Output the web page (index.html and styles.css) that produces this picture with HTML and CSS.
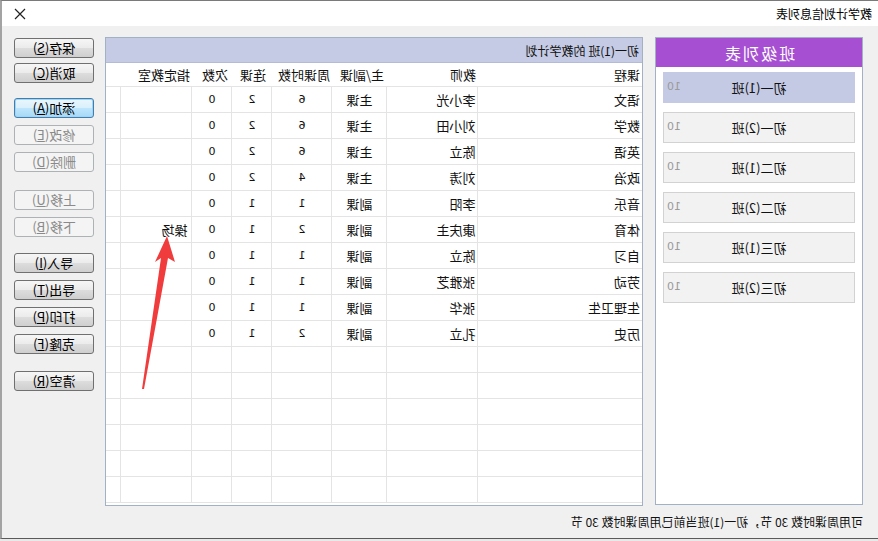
FILE: index.html
```html
<!DOCTYPE html>
<html lang="zh-CN">
<head>
<meta charset="utf-8">
<title>教学计划信息列表</title>
<link rel="stylesheet" href="styles.css">
</head>
<body>
<div class="window">
  <div class="titlebar">
    <span class="title">教学计划信息列表</span>
    <svg class="close" width="12" height="12" viewBox="0 0 12 12"><path d="M1 1 L11 11 M11 1 L1 11" stroke="#222" stroke-width="1.2" fill="none"/></svg>
  </div>
  <div class="content">
    <div class="main">
      <div class="classpanel">
        <div class="classhead">班级列表</div>
        <div class="classlist">
          <div class="classitem sel"><span class="cname">初一(1)班</span><span class="ccount">10</span></div>
          <div class="classitem"><span class="cname">初一(2)班</span><span class="ccount">10</span></div>
          <div class="classitem"><span class="cname">初二(1)班</span><span class="ccount">10</span></div>
          <div class="classitem"><span class="cname">初二(2)班</span><span class="ccount">10</span></div>
          <div class="classitem"><span class="cname">初三(1)班</span><span class="ccount">10</span></div>
          <div class="classitem"><span class="cname">初三(2)班</span><span class="ccount">10</span></div>
        </div>
      </div>
      <div class="tablepanel">
        <div class="tablehead">初一(1)班 的教学计划</div>
        <table class="grid">
          <colgroup>
            <col class="c1"><col class="c2"><col class="c3"><col class="c4"><col class="c5"><col class="c6"><col class="c7"><col class="c8">
          </colgroup>
          <thead>
            <tr><th>课程</th><th>教师</th><th class="h3">主/副课</th><th class="h4">周课时数</th><th class="h5">连课</th><th class="h6">次数</th><th class="h7">指定教室</th><th></th></tr>
          </thead>
          <tbody>
            <tr><td>语文</td><td>李小光</td><td class="ct">主课</td><td class="ct">6</td><td class="ct">2</td><td class="ct">0</td><td class="room"></td><td></td></tr>
            <tr><td>数学</td><td>刘小田</td><td class="ct">主课</td><td class="ct">6</td><td class="ct">2</td><td class="ct">0</td><td class="room"></td><td></td></tr>
            <tr><td>英语</td><td>陈立</td><td class="ct">主课</td><td class="ct">6</td><td class="ct">2</td><td class="ct">0</td><td class="room"></td><td></td></tr>
            <tr><td>政治</td><td>刘涛</td><td class="ct">主课</td><td class="ct">4</td><td class="ct">2</td><td class="ct">0</td><td class="room"></td><td></td></tr>
            <tr><td>音乐</td><td>李阳</td><td class="ct">副课</td><td class="ct">1</td><td class="ct">1</td><td class="ct">0</td><td class="room"></td><td></td></tr>
            <tr><td>体育</td><td>康庆主</td><td class="ct">副课</td><td class="ct">2</td><td class="ct">1</td><td class="ct">0</td><td class="room">操场</td><td></td></tr>
            <tr><td>自习</td><td>陈立</td><td class="ct">副课</td><td class="ct">1</td><td class="ct">1</td><td class="ct">0</td><td class="room"></td><td></td></tr>
            <tr><td>劳动</td><td>张雅芝</td><td class="ct">副课</td><td class="ct">1</td><td class="ct">1</td><td class="ct">0</td><td class="room"></td><td></td></tr>
            <tr><td>生理卫生</td><td>张华</td><td class="ct">副课</td><td class="ct">1</td><td class="ct">1</td><td class="ct">0</td><td class="room"></td><td></td></tr>
            <tr><td>历史</td><td>孔立</td><td class="ct">副课</td><td class="ct">2</td><td class="ct">1</td><td class="ct">0</td><td class="room"></td><td></td></tr>
            <tr><td></td><td></td><td></td><td></td><td></td><td></td><td></td><td></td></tr>
            <tr><td></td><td></td><td></td><td></td><td></td><td></td><td></td><td></td></tr>
            <tr><td></td><td></td><td></td><td></td><td></td><td></td><td></td><td></td></tr>
            <tr><td></td><td></td><td></td><td></td><td></td><td></td><td></td><td></td></tr>
            <tr><td></td><td></td><td></td><td></td><td></td><td></td><td></td><td></td></tr>
            <tr><td></td><td></td><td></td><td></td><td></td><td></td><td></td><td></td></tr>
          </tbody>
        </table>
      </div>
      <div class="buttons">
        <div class="grp g1">
          <button class="btn">保存(<u>S</u>)</button>
          <button class="btn">取消(<u>C</u>)</button>
        </div>
        <div class="grp g2">
          <button class="btn focus">添加(<u>A</u>)</button>
          <button class="btn dis">修改(<u>E</u>)</button>
          <button class="btn dis">删除(<u>D</u>)</button>
        </div>
        <div class="grp g3">
          <button class="btn dis">上移(<u>U</u>)</button>
          <button class="btn dis">下移(<u>B</u>)</button>
        </div>
        <div class="grp g4">
          <button class="btn">导入(<u>I</u>)</button>
          <button class="btn">导出(<u>T</u>)</button>
          <button class="btn">打印(<u>P</u>)</button>
          <button class="btn">克隆(<u>F</u>)</button>
        </div>
        <div class="grp g5">
          <button class="btn">清空(<u>R</u>)</button>
        </div>
      </div>
    </div>
    <div class="footer">可用周课时数 30 节，初一(1)班当前已用周课时数 30 节</div>
  </div>
</div>
<svg class="arrow" width="878" height="541" viewBox="0 0 878 541">
  <polygon points="167,236 175,262 168,258 144,389 142,389 161,258 155,262" fill="#f03c3c"/>
</svg>
</body>
</html>
```

FILE: styles.css
```css
html, body {
  margin: 0;
  padding: 0;
  background: #e9e9e9;
  overflow: hidden;
}

body {
  position: relative;
  width: 878px;
  height: 541px;
}

.window {
  width: 878px;
  height: 539px;
  box-sizing: border-box;
  transform: scaleX(-1);
  background: #f0f0f0;
  border-top: 1px solid #7a7a7a;
  border-bottom: 1px solid #5a5a5a;
  border-right: 2px solid #a3a3a3;
  display: flex;
  flex-direction: column;
  font-family: "Noto Sans CJK SC", "DejaVu Sans", sans-serif;
  font-size: 13px;
  color: #111;
}

.titlebar {
  height: 25px;
  background: #fff;
  display: flex;
  align-items: center;
  justify-content: space-between;
  padding: 0 12px 0 6px;
  flex: none;
}

.title {
  font-size: 12px;
  line-height: 14px;
  color: #000;
}

.close {
  display: block;
}

.content {
  flex: 1;
  display: flex;
  flex-direction: column;
  padding: 11px 12px 0 15px;
}

.main {
  display: flex;
  height: 469px;
}

.classpanel {
  width: 208px;
  height: 468px;
  box-sizing: border-box;
  border: 1px solid #a2b2c4;
  background: #fff;
  display: flex;
  flex-direction: column;
}

.classhead {
  height: 29px;
  background: #a64fd2;
  color: #fff;
  font-size: 16px;
  letter-spacing: 2px;
  display: flex;
  align-items: center;
  justify-content: center;
  flex: none;
}

.classlist {
  padding: 5px 7px 0 7px;
  display: flex;
  flex-direction: column;
  gap: 9px;
}

.classitem {
  height: 31px;
  box-sizing: border-box;
  border: 1px solid #d2d2d2;
  background: #f2f2f2;
  display: flex;
  align-items: center;
  position: relative;
  justify-content: center;
}

.classitem.sel {
  background: #c5cae4;
  border-color: #c5cae4;
}

.cname {
  font-size: 13px;
}

.ccount {
  position: absolute;
  right: 3px;
  top: 7px;
  color: #9a9a9a;
  font-family: "DejaVu Sans", sans-serif;
  font-size: 11px;
}

.tablepanel {
  width: 538px;
  height: 469px;
  box-sizing: border-box;
  margin-left: 12px;
  border: 1px solid #a2b2c4;
  background: #fff;
  overflow: hidden;
}

.tablehead {
  height: 24px;
  background: #c5cbe4;
  display: flex;
  align-items: center;
  padding-left: 3px;
  font-size: 12px;
  border-bottom: 1px solid #b3bbd6;
}

.grid {
  border-collapse: collapse;
  table-layout: fixed;
  width: 536px;
}

.c1 { width: 164px; }
.c2 { width: 91px; }
.c3 { width: 55px; }
.c4 { width: 60px; }
.c5 { width: 40px; }
.c6 { width: 40px; }
.c7 { width: 71px; }
.c8 { width: 15px; }

.grid th {
  height: 23px;
  font-weight: normal;
  text-align: left;
  padding: 0 0 0 2px;
  border-bottom: 1px solid #e4e4e4;
  white-space: nowrap;
  overflow: hidden;
}

.grid th.h3 { padding-left: 3px; }
.grid th.h4 { padding-left: 2px; }
.grid th.h5 { padding-left: 6px; }
.grid th.h6 { padding-left: 4px; }
.grid th.h7 { padding-left: 2px; }

.grid td {
  height: 25px;
  padding: 0 0 0 2px;
  border-bottom: 1px solid #e4e4e4;
  border-right: 1px solid #e4e4e4;
  white-space: nowrap;
  overflow: hidden;
}

.grid td:last-child {
  border-right: none;
}

.grid td.ct {
  text-align: center;
  padding: 0;
  font-family: "DejaVu Sans", "Noto Sans CJK SC", sans-serif;
  font-size: 11px;
}

.grid td.ct:nth-child(3) {
  font-family: "Noto Sans CJK SC", sans-serif;
  font-size: 13px;
}

.grid td.room {
  padding-left: 4px;
}

.buttons {
  width: 80px;
  margin-left: 11px;
  padding-top: 1px;
  display: flex;
  flex-direction: column;
}

.grp {
  display: flex;
  flex-direction: column;
  gap: 7px;
}

.g1 { gap: 5px; }
.g2 { margin-top: 15px; }
.g3 { margin-top: 18px; }
.g4 { margin-top: 16px; }
.g5 { margin-top: 17px; }

.btn {
  width: 80px;
  height: 20px;
  box-sizing: border-box;
  border: 1px solid #707070;
  border-radius: 3px;
  background: linear-gradient(#f6f6f6, #ebebeb 50%, #dddddd 51%, #cfcfcf);
  font-family: "Noto Sans CJK SC", sans-serif;
  font-size: 13px;
  color: #000;
  padding: 0;
  line-height: 16px;
}

.btn u {
  text-decoration: underline;
  text-underline-offset: 1px;
}

.btn.focus {
  border-color: #3c7fb1;
  box-shadow: inset 0 0 0 1px #a7d2f0;
  background: linear-gradient(#eaf6fd, #d9f0fc 50%, #bee6fd 51%, #a7d9f5);
}

.btn.dis {
  border-color: #adb2b5;
  background: #f4f4f4;
  color: #8a8a8a;
}

.footer {
  margin-top: 9px;
  font-size: 12px;
  line-height: 14px;
}

.arrow {
  position: absolute;
  left: 0;
  top: 0;
  pointer-events: none;
}
```
